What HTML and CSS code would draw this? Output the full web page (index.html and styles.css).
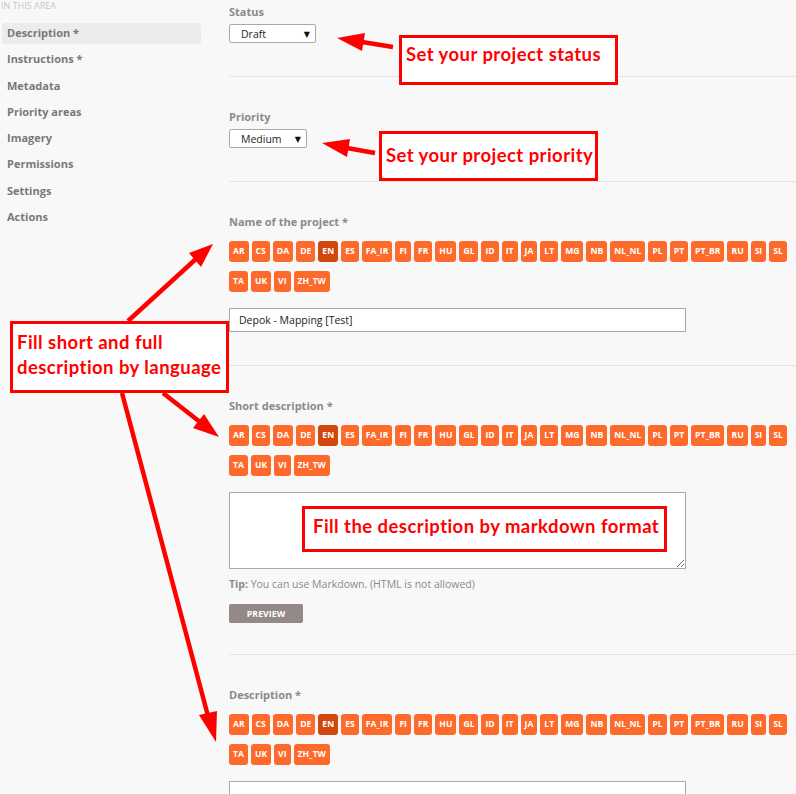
FILE: index.html
```html
<!DOCTYPE html>
<html lang="en">
<head>
<meta charset="utf-8">
<title>Project edit - Description</title>
<link rel="stylesheet" href="styles.css">
</head>
<body>
<div class="page">
  <nav class="sidebar">
    <div class="side-title">In this area</div>
    <ul class="side-list">
      <li class="side-item active">Description *</li>
      <li class="side-item">Instructions *</li>
      <li class="side-item">Metadata</li>
      <li class="side-item">Priority areas</li>
      <li class="side-item">Imagery</li>
      <li class="side-item">Permissions</li>
      <li class="side-item">Settings</li>
      <li class="side-item">Actions</li>
    </ul>
  </nav>

  <main class="content">
    <section class="field field-first">
      <div class="field-label">Status</div>
      <div class="select select-status"><span>Draft</span><span class="caret">▼</span></div>
    </section>

    <section class="field">
      <div class="field-label">Priority</div>
      <div class="select select-priority"><span>Medium</span><span class="caret">▼</span></div>
    </section>

    <section class="field">
      <div class="field-label">Name of the project *</div>
      <div class="langs">
        <span class="lang">AR</span><span class="lang">CS</span><span class="lang">DA</span><span class="lang">DE</span><span class="lang active">EN</span><span class="lang">ES</span><span class="lang">FA_IR</span><span class="lang">FI</span><span class="lang">FR</span><span class="lang">HU</span><span class="lang">GL</span><span class="lang">ID</span><span class="lang">IT</span><span class="lang">JA</span><span class="lang">LT</span><span class="lang">MG</span><span class="lang">NB</span><span class="lang">NL_NL</span><span class="lang">PL</span><span class="lang">PT</span><span class="lang">PT_BR</span><span class="lang">RU</span><span class="lang">SI</span><span class="lang">SL</span><span class="lang">TA</span><span class="lang">UK</span><span class="lang">VI</span><span class="lang">ZH_TW</span>
      </div>
      <input class="text-input" type="text" value="Depok - Mapping [Test]" readonly>
    </section>

    <section class="field field-md">
      <div class="field-label">Short description *</div>
      <div class="langs">
        <span class="lang">AR</span><span class="lang">CS</span><span class="lang">DA</span><span class="lang">DE</span><span class="lang active">EN</span><span class="lang">ES</span><span class="lang">FA_IR</span><span class="lang">FI</span><span class="lang">FR</span><span class="lang">HU</span><span class="lang">GL</span><span class="lang">ID</span><span class="lang">IT</span><span class="lang">JA</span><span class="lang">LT</span><span class="lang">MG</span><span class="lang">NB</span><span class="lang">NL_NL</span><span class="lang">PL</span><span class="lang">PT</span><span class="lang">PT_BR</span><span class="lang">RU</span><span class="lang">SI</span><span class="lang">SL</span><span class="lang">TA</span><span class="lang">UK</span><span class="lang">VI</span><span class="lang">ZH_TW</span>
      </div>
      <textarea class="textarea" readonly></textarea>
      <p class="tip"><b>Tip:</b> You can use Markdown. (HTML is not allowed)</p>
      <button class="preview" type="button">Preview</button>
    </section>

    <section class="field">
      <div class="field-label">Description *</div>
      <div class="langs">
        <span class="lang">AR</span><span class="lang">CS</span><span class="lang">DA</span><span class="lang">DE</span><span class="lang active">EN</span><span class="lang">ES</span><span class="lang">FA_IR</span><span class="lang">FI</span><span class="lang">FR</span><span class="lang">HU</span><span class="lang">GL</span><span class="lang">ID</span><span class="lang">IT</span><span class="lang">JA</span><span class="lang">LT</span><span class="lang">MG</span><span class="lang">NB</span><span class="lang">NL_NL</span><span class="lang">PL</span><span class="lang">PT</span><span class="lang">PT_BR</span><span class="lang">RU</span><span class="lang">SI</span><span class="lang">SL</span><span class="lang">TA</span><span class="lang">UK</span><span class="lang">VI</span><span class="lang">ZH_TW</span>
      </div>
      <textarea class="textarea textarea-tall" readonly></textarea>
    </section>
  </main>
</div>

<svg class="arrows" width="796" height="794" viewBox="0 0 796 794" aria-hidden="true">
  <g stroke="#ff0000" stroke-width="4.5" stroke-linecap="butt" fill="none">
    <line x1="393" y1="47" x2="362" y2="42"/>
    <line x1="375" y1="153" x2="347" y2="148"/>
    <line x1="128" y1="321" x2="197" y2="258"/>
    <line x1="163" y1="393" x2="200" y2="422"/>
    <line x1="122" y1="393" x2="208" y2="716"/>
  </g>
  <g fill="#ff0000">
    <polygon points="337,38 365,33 362,51"/>
    <polygon points="322,143 350,139 347,157"/>
    <polygon points="213,244 189,253 201,267"/>
    <polygon points="219,437 204,414 193,428"/>
    <polygon points="216,742 217,711 199,715"/>
  </g>
</svg>

<div class="note note-status">Set your project status</div>
<div class="note note-priority">Set your project priority</div>
<div class="note note-lang">Fill short and full description by language</div>
<div class="note note-markdown">Fill the description by markdown format</div>
</body>
</html>
```

FILE: styles.css
```css
* { box-sizing: border-box; }

html, body {
  margin: 0;
  padding: 0;
}

body {
  width: 796px;
  height: 794px;
  overflow: hidden;
  position: relative;
  background: #f8f8f8;
  font-family: "Open Sans", "DejaVu Sans", sans-serif;
  color: #333;
}

.page {
  display: grid;
  grid-template-columns: 229px 567px;
}

/* Sidebar */
.sidebar {
  padding-left: 2px;
}

.side-title {
  font-size: 9px;
  line-height: 12px;
  text-transform: uppercase;
  color: #c6c6c6;
  margin-left: -1px;
  margin-bottom: 11px;
}

.side-list {
  list-style: none;
  margin: 0;
  padding: 0;
  width: 199px;
  display: flex;
  flex-direction: column;
  gap: 5.3px;
}

.side-item {
  height: 21px;
  line-height: 20px;
  padding-left: 5px;
  font-size: 11px;
  font-weight: 700;
  color: #787878;
  border-radius: 3px;
}

.side-item.active {
  background: #ececec;
}

/* Main content */
.content {
  overflow: hidden;
}

.field {
  padding: 32px 0 33px;
  border-bottom: 1px solid #e4e4e4;
}

.field-first {
  padding-top: 4px;
  padding-bottom: 33px;
}

.field-md {
  padding-bottom: 31px;
}

.field-label {
  font-size: 11px;
  line-height: 16px;
  font-weight: 700;
  color: #8a8a8a;
  margin-bottom: 4px;
}

.select {
  display: flex;
  align-items: center;
  justify-content: space-between;
  height: 19px;
  padding: 0 5px 0 11px;
  background: #fff;
  border: 1px solid #a9a9a9;
  border-radius: 2px;
  font-size: 10.5px;
  color: #222;
}

.select-status { width: 87px; }
.select-priority { width: 78px; }

.caret {
  font-size: 8px;
  color: #111;
}

/* Language buttons */
.langs {
  display: flex;
  flex-wrap: wrap;
  gap: 9px 3px;
  width: 567px;
  margin-top: 11px;
}

.lang {
  height: 21px;
  line-height: 21px;
  padding: 0 4px;
  background: #fd6a2b;
  color: #fff;
  font-size: 8.6px;
  font-weight: 700;
  border-radius: 3px;
}

.lang.active {
  background: #d4470c;
}

.text-input {
  display: block;
  width: 457px;
  height: 24px;
  margin-top: 16px;
  padding: 0 9px;
  border: 1px solid #aaa;
  border-radius: 0;
  background: #fff;
  font-family: "Open Sans", sans-serif;
  font-size: 10.5px;
  color: #222;
}

.textarea {
  display: block;
  width: 457px;
  height: 77px;
  margin: 16px 0 0;
  border: 1px solid #aaa;
  border-radius: 0;
  background: #fff;
  resize: both;
  font-family: "Open Sans", sans-serif;
}

.textarea-tall {
  height: 120px;
}

.tip {
  margin: 7px 0 0;
  font-size: 10.5px;
  line-height: 16px;
  color: #8a8a8a;
}

.tip b {
  font-weight: 700;
}

.preview {
  display: block;
  width: 74px;
  height: 19px;
  margin-top: 12px;
  padding: 0;
  border: 0;
  border-radius: 2px;
  background: #948888;
  color: #fff;
  font-family: "Open Sans", sans-serif;
  font-size: 8.8px;
  font-weight: 700;
  text-transform: uppercase;
}

/* Annotation overlays */
.arrows {
  position: absolute;
  left: 0;
  top: 0;
  pointer-events: none;
}

.note {
  position: absolute;
  background: #fff;
  border: 3px solid #ff0000;
  color: #ff0000;
  font-family: Lato, "Open Sans", sans-serif;
  font-weight: 700;
  font-size: 18.5px;
  letter-spacing: 0.45px;
  line-height: 25px;
  padding-left: 4px;
  white-space: nowrap;
}

.note-status {
  left: 399px;
  top: 35px;
  width: 219px;
  height: 50px;
  padding-top: 4.3px;
}

.note-priority {
  left: 379px;
  top: 131px;
  width: 219px;
  height: 50px;
  padding-top: 9.3px;
}

.note-lang {
  left: 10px;
  top: 321px;
  width: 219px;
  height: 72px;
  padding-top: 6.3px;
  white-space: normal;
  padding-right: 2px;
}

.note-markdown {
  left: 302px;
  top: 506px;
  width: 365px;
  height: 46px;
  padding-top: 5.3px;
  padding-left: 8px;
}
```
